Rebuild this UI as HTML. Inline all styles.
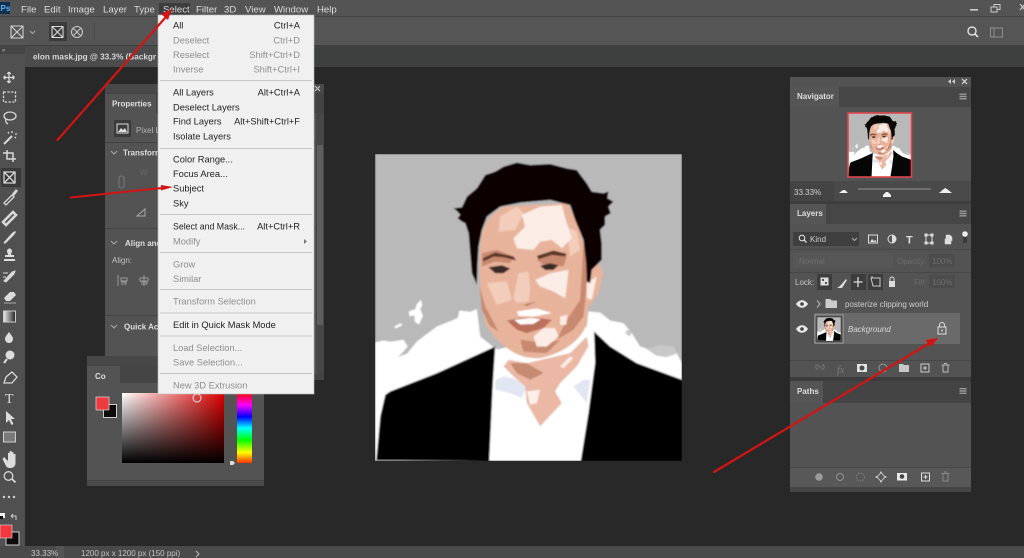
<!DOCTYPE html>
<html><head><meta charset="utf-8"><title>Photoshop Select Menu</title>
<style>
html,body{margin:0;padding:0;background:#282828;width:1024px;height:558px;overflow:hidden}
svg{display:block;filter:blur(.35px)}
text{font-family:"Liberation Sans",sans-serif;white-space:pre}
.mb{font-size:9.6px;fill:#dcdcdc}
.m{font-size:9.3px;fill:#222}
.d{font-size:9.3px;fill:#8e8e8e}
.r{text-anchor:end}
.h{font-size:8px;font-weight:bold;fill:#dedede}
.sep{stroke:#c6c6c6;stroke-width:1}
</style></head><body>
<svg width="1024" height="558" viewBox="0 0 1024 558" xmlns="http://www.w3.org/2000/svg">
<defs>
<filter id="soft" x="-2%" y="-2%" width="104%" height="104%"><feGaussianBlur stdDeviation="2.200"/></filter>
<g id="portrait">
<rect x="14" y="12" width="922" height="922" fill="#b9b9b9"/>
<path fill="#fff" d="M14 578L40 572L60 576L100 570L112 590L95 610L82 622L110 612L140 575L200 530L245 512L262 505L268 482L300 486L320 478L330 560L380 600L650 530L655 485L690 488L720 512L760 520L785 550L810 590L840 600L880 590L915 600L936 640L936 934L14 934Z"/>
<path fill="#fff" d="M115 485L135 478L140 462L152 450L156 465L150 478L158 498L146 524L134 516L132 496L118 500ZM72 530L92 520L96 526L76 536Z"/>
<path fill="#c8c8c8" d="M830 598L870 586L912 590L920 612L890 622L860 618ZM770 540L786 546L780 560L766 552Z"/>
<path fill="#fff" d="M375 595L357 934L632 934L655 790L676 640L672 540L650 560L600 620L500 630L420 620Z"/>
<path fill="#e2e6f2" d="M376 690L400 680L430 685L470 710L455 745L420 730L375 720ZM660 690L650 760L610 710L640 690Z"/>
<path fill="#eab8a4" d="M415 630L470 640L600 610L650 560L655 590L620 650L570 700L555 725L575 760L510 830L470 760L465 710L430 680L400 650Z"/>
<path fill="#c58a70" d="M420 640L470 640L520 670L480 690L440 670Z"/>
<path fill="#fdeee8" d="M570 650L600 620L610 625L580 655ZM470 725L510 720L500 760L480 765Z"/>
<path fill="#060606" d="M18 932L30 800L45 735L60 725L200 670L375 590L368 700L357 934ZM672 545L720 590L800 640L936 690L936 934L632 934L655 790L675 640Z"/>
<path fill="#e8b39b" d="M330 300C330 240 350 200 400 170L590 160C620 200 640 260 650 350L690 345L700 370L685 430L655 470L650 520C640 560 590 610 510 625C450 630 400 600 350 530C335 490 325 400 330 300Z"/>
<path fill="#c78a70" d="M328 410L345 470L385 545L360 530L335 480ZM640 280L652 340L648 430L640 500L610 540L560 570L590 510L630 450L635 370ZM450 570L530 580L570 570L530 610L460 606ZM335 310L380 300L430 320L420 340L375 335L335 350ZM500 330L545 310L590 320L580 350L520 345Z"/>
<path fill="#f3cdbc" d="M390 200L440 170L460 190L435 240L385 245ZM445 370L475 365L480 420L475 455L440 460L430 445ZM350 400L410 395L425 450L380 465ZM590 230L620 245L630 300L600 320Z"/>
<path fill="#fcece6" d="M455 195L510 170L575 165L590 220L605 265L575 295L545 270L510 275L490 300L440 295L430 265L465 230ZM495 390L540 370L595 360L590 410L585 445L550 425L510 410ZM490 560L520 535L555 535L565 560L530 590L500 590ZM570 500L592 495L588 525L570 525ZM650 400L680 380L665 450L650 445Z"/>
<path fill="#090604" d="M250 175L275 172L290 140L320 115L345 75L375 65L400 50L440 38L480 45L540 42L590 55L620 60L650 100L665 125L700 130L715 125L712 145L730 155L715 170L722 190L705 200L705 225L690 240L695 280L695 330L680 345L665 360L660 400L650 395L648 340L640 270L615 210L600 165L540 150L450 158L390 170L350 200L335 240L325 290L322 340L320 405L305 370L300 310L295 250L285 220L275 215L262 205L270 195L262 185Z"/>
<path fill="#5b3527" d="M338 325L375 308L430 320L438 332L400 322L370 320L340 335ZM500 318L550 302L590 312L585 320L545 315L505 328Z"/>
<path fill="#3a2a26" d="M355 352L395 346L420 356L400 370L375 370ZM510 348L540 340L565 346L550 360L525 360Z"/>
<path fill="#fff" d="M440 485L500 476L545 490L490 500L445 498Z"/>
<path fill="#bb6f5c" d="M410 512L450 505L510 505L545 510L520 535L470 550L440 540Z"/>
<path fill="#fff" d="M432 510L482 505L512 508L490 522L450 524Z"/>
<path fill="#a96c56" d="M430 455L460 465L500 455L470 468Z"/>
</g>
<path id="eye" d="M-6 0c3 -5 9 -5 12 0c-3 5 -9 5 -12 0Z" fill="#e8e8e8"/>
<path id="menuic" d="M-3.500 -3h7v1.400h-7zM-3.500 -.7h7v1.400h-7zM-3.500 1.600h7v1.400h-7z" fill="#999"/>
<linearGradient id="tg"><stop offset="0" stop-color="#eee"/><stop offset="1" stop-color="#222"/></linearGradient>
<linearGradient id="hue" x1="0" y1="0" x2="0" y2="1"><stop offset="0" stop-color="#f00"/><stop offset=".17" stop-color="#f0f"/><stop offset=".34" stop-color="#00f"/><stop offset=".5" stop-color="#0ff"/><stop offset=".67" stop-color="#0f0"/><stop offset=".85" stop-color="#ff0"/><stop offset="1" stop-color="#f30"/></linearGradient>
<linearGradient id="gh"><stop offset="0" stop-color="#fff"/><stop offset="1" stop-color="#e00000"/></linearGradient>
<linearGradient id="gv" x1="0" y1="0" x2="0" y2="1"><stop offset="0" stop-color="#000" stop-opacity="0"/><stop offset="1" stop-color="#000"/></linearGradient>
</defs>

<!-- App chrome -->
<rect width="1024" height="558" fill="#282828"/>
<rect width="1024" height="16" fill="#535453"/>
<rect y="16" width="1024" height="1" fill="#454545"/>
<rect y="17" width="1024" height="28" fill="#545554"/>
<rect y="45" width="1024" height="22" fill="#3e3f3f"/>
<rect y="45" width="25" height="501" fill="#505050"/>
<rect y="45" width="25" height="9" fill="#454545"/>
<rect x="25" y="46" width="137" height="21" fill="#4c4c4c"/>
<rect y="546" width="1024" height="12" fill="#4a4a4a"/>
<rect x="56" y="546" width="8" height="12" fill="#555"/>

<!-- Menu bar -->
<rect x="0" y="2" width="10" height="12" fill="#12304e"/>
<text x="0.500" y="11" style="font-size:8px;font-weight:bold;fill:#5ab4f0">Ps</text>
<rect x="159" y="3" width="31" height="12" fill="#3d3d3d"/>
<text class="mb" x="21" y="12.500">File</text>
<text class="mb" x="44" y="12.500">Edit</text>
<text class="mb" x="68" y="12.500">Image</text>
<text class="mb" x="103" y="12.500">Layer</text>
<text class="mb" x="134" y="12.500">Type</text>
<text class="mb" x="163" y="12.500">Select</text>
<text class="mb" x="196" y="12.500">Filter</text>
<text class="mb" x="224" y="12.500">3D</text>
<text class="mb" x="245" y="12.500">View</text>
<text class="mb" x="274" y="12.500">Window</text>
<text class="mb" x="317" y="12.500">Help</text>
<rect x="970" y="9" width="8" height="1.600" fill="#ccc"/>
<path d="M991 7h6v5h-6zM994 7v-2.500h6v5h-3" fill="none" stroke="#ccc" stroke-width="1"/>
<path d="M1020 4l5 6M1025 4l-5 6" stroke="#ccc" stroke-width="1.200"/>

<!-- Options bar -->
<path style="fill:none;stroke:#d0d0d0;stroke-width:1.100" d="M11 26h12v12h-12zM11 26l12 12M23 26l-12 12"/>
<path style="fill:none;stroke:#aaa;stroke-width:1" d="M30 31l2.500 2.500 2.500 -2.500"/>
<rect x="49" y="22" width="18" height="19" fill="#3b3b3b"/>
<path style="fill:none;stroke:#d8d8d8;stroke-width:1.100" d="M52 26.500h11v11h-11zM52 26.500l11 11M63 26.500l-11 11"/>
<circle cx="77" cy="32" r="5.500" style="fill:none;stroke:#c8c8c8;stroke-width:1.100"/>
<path d="M73.500 28.500l7 7M80.500 28.500l-7 7" stroke="#c8c8c8" stroke-width="1"/>
<rect x="94" y="23" width="1" height="17" fill="#484848"/>
<circle cx="972" cy="31" r="4" style="fill:none;stroke:#e0e0e0;stroke-width:1.400"/>
<path d="M975 34l3 3" stroke="#e0e0e0" stroke-width="1.600"/>
<path d="M990.500 28h12v9h-12zM994 28v9" fill="none" stroke="#8e8e8e" stroke-width="1"/>

<!-- Tab -->
<text x="33" y="59.500" style="font-size:8.200px;font-weight:bold;fill:#d8d8d8">elon mask.jpg @ 33.3% (Backgr</text>
<text x="2" y="52" style="font-size:6px;fill:#bbb">»</text>

<!-- Toolbar -->
<rect x="1" y="168" width="20" height="19" fill="#3a3a3a"/>
<g fill="none" stroke="#d8d8d8" stroke-width="1.300">
<path d="M9 72v11M3.500 77.500h11M9 72l-1.800 2M9 72l1.800 2M9 83l-1.800 -2M9 83l1.800 -2M3.500 77.500l2 -1.800M3.500 77.500l2 1.800M14.500 77.500l-2 -1.800M14.500 77.500l-2 1.800"/>
<rect x="3.500" y="92" width="12" height="10" stroke-dasharray="2.400 1.400"/>
<ellipse cx="10" cy="116" rx="6" ry="4"/><path d="M6 119c-1 2 0 4 2 5"/>
<path d="M4 144l8 -8" stroke-width="2"/><path d="M12 131v2M15 134h2M8 132l1 1.500M16 138l-1.500 -1"/>
<path d="M3 153h10v9M7 150v9h9" stroke-width="1.500"/>
<path d="M4 172h11v11h-11zM4 172l11 11M15 172l-11 11"/>
<path d="M4 203l8 -8 2 2 -8 8z"/>
<path d="M3 222l10 -10 3 3 -10 10z" stroke-width="2.600"/>
</g>
<path d="M12 194l4 -5 2 2 -4 5z" fill="#d8d8d8"/>
<path d="M4 242l8 -9 3 -2 1 1 -2 3 -8 8c-1 1 -3 1 -2 -1z" fill="#dcdcdc"/>
<path d="M7 251a2.500 2.500 0 0 1 5 0c0 2 -1 2 -1 4h3v2h-9v-2h3c0 -2 -1 -2 -1 -4zM4 259h11v2h-11z" fill="#dcdcdc"/>
<path d="M4 281l8 -9 3 -1 -1 3 -8 8zM3 273h5M3 277h3" stroke="#d8d8d8" fill="#d8d8d8" stroke-width="1"/>
<path d="M4 298l6 -6h4l2 3 -6 6h-4z" fill="#dcdcdc"/><path d="M4 303h12" stroke="#aaa" stroke-width="1"/>
<rect x="3.500" y="311" width="12" height="11" fill="url(#tg)" stroke="#ccc"/>
<path d="M9 332c3 4 4 5 4 7a4 4 0 0 1 -8 0c0 -2 1 -3 4 -7z" fill="#dcdcdc"/>
<circle cx="10" cy="355" r="4.500" fill="#dcdcdc"/><path d="M7 359l-3 4" stroke="#dcdcdc" stroke-width="2"/>
<path d="M4 383l2 -6 6 -5 5 5 -5 6z" fill="none" stroke="#d8d8d8" stroke-width="1.300"/>
<text x="5" y="403" style="font-size:14px;fill:#dcdcdc;font-family:'Liberation Serif',serif">T</text>
<path d="M6 411v12l3 -3 2.500 5 2 -1 -2.500 -5h4z" fill="#dcdcdc"/>
<rect x="3.500" y="432" width="12" height="10" fill="#7a7a7a" stroke="#cfcfcf"/>
<path d="M4 457l4 4v-8h1.500v6v-8h2v7v-6h2v7v-5h2v9c0 3 -2 5 -5 5s-4 -1 -5 -3l-3 -6z" fill="#dcdcdc"/>
<circle cx="8.500" cy="476" r="4.300" fill="none" stroke="#d8d8d8" stroke-width="1.300"/><path d="M12 479l3.500 3.500" stroke="#d8d8d8" stroke-width="1.800"/>
<g fill="#cfcfcf"><circle cx="4" cy="497" r="1.200"/><circle cx="9" cy="497" r="1.200"/><circle cx="14" cy="497" r="1.200"/></g>
<rect x="0" y="513" width="5" height="5" fill="#eee"/><rect x="0" y="516" width="3" height="3" fill="#111"/>
<path d="M11 516h5v4M11 516l2 -2M11 516l2 2" fill="none" stroke="#ccc" stroke-width="1"/>
<rect x="6" y="532" width="13" height="13" fill="#0c0c0c" stroke="#ccc"/>
<rect x="0" y="525" width="12" height="13" fill="#f2383d" stroke="#ddd" stroke-width=".6"/>

<!-- Canvas -->
<svg x="375" y="154" width="307" height="307" viewBox="14 12 922 922"><use href="#portrait" filter="url(#soft)"/></svg>

<!-- Properties panel -->
<rect x="105" y="84" width="219" height="296" fill="#535353"/>
<rect x="105" y="84" width="219" height="9" fill="#484848"/>
<rect x="105" y="93" width="219" height="20" fill="#434343"/>
<rect x="105" y="94" width="51" height="20" fill="#535353"/>
<text class="h" x="112" y="106.500">Properties</text>
<path d="M315 86l5 5M320 86l-5 5" stroke="#ccc" stroke-width="1"/>
<rect x="105" y="142" width="219" height="1" fill="#424242"/>
<rect x="114" y="120" width="17" height="17" fill="#3a3a3a"/>
<rect x="117" y="124" width="11" height="9" fill="none" stroke="#ddd"/><path d="M118 132l3 -4 2 2 2 -2 2 4z" fill="#ddd"/>
<text x="136" y="133" style="font-size:8px;fill:#b5b5b5">Pixel L</text>
<path d="M111 151l3 3 3 -3" fill="none" stroke="#aaa" stroke-width="1"/>
<text class="h" x="123" y="155.500">Transform</text>
<text x="140" y="175" style="font-size:8px;fill:#6a6a6a">W</text>
<rect x="119" y="176" width="5" height="12" rx="2" fill="none" stroke="#7a7a7a"/>
<path d="M137 216l8 -7v7z" fill="none" stroke="#aaa"/>
<rect x="105" y="228" width="219" height="1" fill="#454545"/>
<path d="M111 241l3 3 3 -3" fill="none" stroke="#aaa" stroke-width="1"/>
<text class="h" x="125" y="246">Align and</text>
<text x="112" y="263" style="font-size:8px;fill:#c0c0c0">Align:</text>
<path d="M118 275v11M121 278h6v3h-6zM121 282h5v2h-5M144 275v11M140 278h8v3h-8zM141 282h6v2h-6" stroke="#999" fill="none"/>
<rect x="105" y="315" width="219" height="1" fill="#454545"/>
<path d="M111 325l3 3 3 -3" fill="none" stroke="#aaa" stroke-width="1"/>
<text class="h" x="124" y="329.500">Quick Act</text>
<rect x="316" y="113" width="8" height="267" fill="#474747"/>
<rect x="317" y="145" width="6" height="180" fill="#5e5e5e"/>
<rect x="105" y="374" width="219" height="6" fill="#444"/>

<!-- Color panel -->
<rect x="87" y="356" width="177" height="130" fill="#535353"/>
<rect x="87" y="356" width="177" height="10" fill="#474747"/>
<rect x="87" y="366" width="177" height="17" fill="#454545"/>
<rect x="87" y="366" width="33" height="18" fill="#535353"/>
<text class="h" x="95" y="379">Co</text>
<rect x="103.500" y="404.500" width="13" height="13" fill="#0c0c0c" stroke="#ccc"/>
<rect x="96" y="397" width="13" height="13" fill="#ee3a40" stroke="#ddd" stroke-width=".7"/>
<rect x="122" y="393" width="102" height="70" fill="url(#gh)"/>
<rect x="122" y="393" width="102" height="70" fill="url(#gv)"/>
<circle cx="197" cy="398" r="4" fill="none" stroke="#eee" stroke-width=".9"/>
<rect x="237" y="393" width="15" height="70" fill="url(#hue)"/>
<path d="M230 461h3l2 2 -2 2h-3z" fill="#ddd"/>
<rect x="87" y="480" width="177" height="1" fill="#454545"/>
<rect x="87" y="481" width="177" height="5" fill="#4a4a4a"/>

<!-- Select menu -->
<rect x="158" y="15" width="156" height="379" fill="#f0f0f0" stroke="#bbb" stroke-width=".6"/>
<text class="m" x="173" y="28.500">All</text><text class="m r" x="300" y="28.500">Ctrl+A</text>
<text class="d" x="173" y="43.500">Deselect</text><text class="d r" x="300" y="43.500">Ctrl+D</text>
<text class="d" x="173" y="58">Reselect</text><text class="d r" x="300" y="58">Shift+Ctrl+D</text>
<text class="d" x="173" y="72.500">Inverse</text><text class="d r" x="300" y="72.500">Shift+Ctrl+I</text>
<path class="sep" d="M160 80.500h152"/>
<text class="m" x="173" y="95.500">All Layers</text><text class="m r" x="300" y="95.500">Alt+Ctrl+A</text>
<text class="m" x="173" y="110.500">Deselect Layers</text>
<text class="m" x="173" y="124.500">Find Layers</text><text class="m r" x="300" y="124.500">Alt+Shift+Ctrl+F</text>
<text class="m" x="173" y="139.500">Isolate Layers</text>
<path class="sep" d="M160 148.500h152"/>
<text class="m" x="173" y="162.500">Color Range...</text>
<text class="m" x="173" y="177">Focus Area...</text>
<text class="m" x="173" y="191.500">Subject</text>
<text class="m" x="173" y="206.500">Sky</text>
<path class="sep" d="M160 214.500h152"/>
<text class="m" x="173" y="229.500" textLength="72" lengthAdjust="spacingAndGlyphs">Select and Mask...</text><text class="m r" x="300" y="229.500">Alt+Ctrl+R</text>
<text class="d" x="173" y="244.500">Modify</text>
<path d="M304 239l3 2.500 -3 2.500z" fill="#777"/>
<path class="sep" d="M160 252.500h152"/>
<text class="d" x="173" y="267.500">Grow</text>
<text class="d" x="173" y="282">Similar</text>
<path class="sep" d="M160 289.500h152"/>
<text class="d" x="173" y="304.500">Transform Selection</text>
<path class="sep" d="M160 313h152"/>
<text class="m" x="173" y="328">Edit in Quick Mask Mode</text>
<path class="sep" d="M160 336h152"/>
<text class="d" x="173" y="351">Load Selection...</text>
<text class="d" x="173" y="365.500">Save Selection...</text>
<path class="sep" d="M160 373.500h152"/>
<text class="d" x="173" y="388.500">New 3D Extrusion</text>

<!-- Right panels -->
<rect x="790" y="77" width="181" height="415" fill="#535353"/>
<path d="M951 79l-3 2.500 3 2.500zM955 79l-3 2.500 3 2.500z" fill="#ccc"/>
<path d="M962 79l5 5M967 79l-5 5" stroke="#ddd" stroke-width="1.200"/>
<rect x="790" y="87" width="181" height="20" fill="#464646"/>
<rect x="790" y="87" width="49" height="20" fill="#555"/>
<text class="h" x="797" y="99">Navigator</text>
<use href="#menuic" x="963" y="96.500"/>
<g transform="translate(848,113.300) scale(.0687) translate(-14,-12)"><use href="#portrait"/></g>
<rect x="848" y="113" width="63.500" height="64" fill="none" stroke="#e0474c" stroke-width="1.600"/>
<rect x="790" y="181" width="181" height="20" fill="#4a4a4a"/>
<rect x="790" y="181" width="44" height="20" fill="#444"/>
<text x="794" y="195" style="font-size:8px;fill:#cfcfcf">33.33%</text>
<path d="M839 193l4 -3h2l3 3z" fill="#eee"/>
<rect x="858" y="188" width="73" height="2" fill="#6e6e6e"/>
<path d="M883 197v-2l3 -3h2l3 3v2z" fill="#f0f0f0"/>
<path d="M939 193l6 -5 2 1 5 4z" fill="#eee"/>
<rect x="790" y="201" width="181" height="3" fill="#3e3e3e"/>
<rect x="790" y="204" width="181" height="20" fill="#464646"/>
<rect x="790" y="204" width="36" height="20" fill="#555"/>
<text class="h" x="797" y="216">Layers</text>
<use href="#menuic" x="963" y="213.500"/>

<rect x="793" y="232" width="66" height="14" fill="#3f3f3f"/>
<circle cx="802" cy="238" r="2.800" fill="none" stroke="#ddd" stroke-width="1.100"/><path d="M804 240l2.500 2.500" stroke="#ddd" stroke-width="1.300"/>
<text x="810" y="242" style="font-size:8px;fill:#ccc">Kind</text>
<path d="M852 238l2.500 2.500 2.500 -2.500" fill="none" stroke="#aaa"/>
<rect x="868.500" y="235" width="9" height="8" fill="none" stroke="#ddd"/><path d="M870 242l2 -3 2 2 2 -1v2z" fill="#ddd"/>
<circle cx="892" cy="239" r="4" fill="none" stroke="#ddd"/><path d="M892 235a4 4 0 0 1 0 8z" fill="#ddd"/>
<text x="906" y="243.500" style="font-size:11px;font-weight:bold;fill:#ddd">T</text>
<path d="M926 235h6v8h-6zM925 234h2v2h-2zM931 234h2v2h-2zM925 242h2v2h-2zM931 242h2v2h-2z" fill="none" stroke="#ddd"/>
<path d="M945 239h6v5h-6zM946 239v-4h4l2 2v4" fill="#ddd" stroke="#ddd" stroke-width=".5"/>
<circle cx="965" cy="234" r="2.800" fill="#eee"/><rect x="963" y="237" width="4" height="6" fill="#3c3c3c"/>
<rect x="790" y="249" width="181" height="1" fill="#484848"/>
<rect x="793" y="253" width="100" height="15" fill="#575757"/>
<text x="799" y="264" style="font-size:8px;fill:#6d6d6d">Normal</text>
<text x="897" y="264" style="font-size:8px;fill:#6d6d6d">Opacity:</text>
<rect x="929" y="254" width="26" height="13" fill="#4c4c4c"/>
<text x="932" y="264" style="font-size:8px;fill:#6d6d6d">100%</text>
<rect x="790" y="272" width="181" height="1" fill="#484848"/>
<text x="795" y="285" style="font-size:8px;fill:#c8c8c8">Lock:</text>
<rect x="817" y="274" width="15" height="16" fill="#3d3d3d"/>
<rect x="851" y="274" width="15" height="16" fill="#3d3d3d"/>
<rect x="868" y="274" width="15" height="16" fill="#3d3d3d"/>
<rect x="820.500" y="277.500" width="8" height="8" fill="#ddd"/><path d="M822 279h2v2h-2zM825 282h2v2h-2z" fill="#555"/>
<path d="M837 288l3 -2 6 -7 1 1 -5 8z" fill="#ddd"/>
<path d="M858 277v10M853.500 282h9" stroke="#ddd" stroke-width="1.300"/>
<path d="M871 278h9v8h-7zM872 276v2M880 284v3" fill="none" stroke="#ccc"/>
<path d="M889 281h6v6h-6z" fill="#ddd"/><path d="M890 281v-2a2 2 0 0 1 4 0v2" fill="none" stroke="#ddd"/>
<text x="914" y="285" style="font-size:8px;fill:#6d6d6d">Fill:</text>
<rect x="929" y="275" width="26" height="13" fill="#4c4c4c"/>
<text x="932" y="285" style="font-size:8px;fill:#6d6d6d">100%</text>

<use href="#eye" x="802" y="304"/><circle cx="802" cy="304" r="1.800" fill="#444"/>
<path d="M817 300.500l3 3.500 -3 3.500" fill="none" stroke="#bbb"/>
<path d="M825.500 299h5l1 1.500h5.500v7.500h-11.500z" fill="#ccc"/>
<text x="845" y="307" style="font-size:8px;fill:#cfcfcf">posterize clipping world</text>
<rect x="814" y="313" width="146" height="31" fill="#6a6a6a"/>
<use href="#eye" x="802" y="329"/><circle cx="802" cy="329" r="1.800" fill="#444"/>
<rect x="815" y="315" width="28" height="28" fill="#4a4a4a" stroke="#ccc" stroke-width=".6"/>
<g transform="translate(817.300,317.300) scale(.0254) translate(-14,-12)"><use href="#portrait"/></g>
<text x="848" y="332" style="font-size:8px;font-style:italic;fill:#d8d8d8">Background</text>
<rect x="938" y="327" width="8" height="7" fill="none" stroke="#ddd"/><path d="M939.500 327v-2a2.500 2.500 0 0 1 5 0v2" fill="none" stroke="#ddd"/><circle cx="942" cy="330.500" r=".9" fill="#ddd"/>

<rect x="790" y="360" width="181" height="1" fill="#474747"/>
<path d="M818 369h-1a2.200 2.200 0 0 1 0 -4h2M822 365h1a2.200 2.200 0 0 1 0 4h-2M818 367h4" stroke="#777" fill="none"/>
<text x="837" y="373" style="font-size:10px;font-style:italic;fill:#7d7d7d;font-family:'Liberation Serif',serif">fx</text>
<rect x="857" y="364" width="10" height="8" fill="#e2e2e2"/><circle cx="862" cy="368" r="2.500" fill="#4a4a4a"/>
<circle cx="883" cy="368" r="4" fill="none" stroke="#999"/>
<path d="M899 364h4l1 1h5v7h-10z" fill="#c8c8c8"/>
<rect x="921" y="364" width="8" height="8" fill="none" stroke="#ccc"/><path d="M925 366v4M923 368h4" stroke="#ccc"/>
<path d="M941.500 365h8M943 365v7h5v-7M944 363.500h3" fill="none" stroke="#bbb"/>

<rect x="790" y="377" width="181" height="4" fill="#3c3c3c"/>
<rect x="790" y="381" width="181" height="22" fill="#444"/>
<rect x="790" y="381" width="33" height="22" fill="#555"/>
<text class="h" x="797" y="394">Paths</text>
<use href="#menuic" x="963" y="391"/>
<rect x="790" y="467" width="181" height="1" fill="#474747"/>
<rect x="790" y="468" width="181" height="19" fill="#585858"/>
<rect x="790" y="487" width="181" height="5" fill="#464646"/>
<circle cx="819" cy="477" r="3.800" fill="#9a9a9a"/>
<circle cx="840" cy="477" r="3.500" fill="none" stroke="#8a8a8a" stroke-width="1.200"/>
<circle cx="860.500" cy="477" r="4" fill="none" stroke="#808080" stroke-dasharray="1.500 1.200"/>
<path d="M881 472.500l4 4.500 -4 4.500 -4 -4.500z" fill="none" stroke="#bdbdbd"/><g fill="#ccc"><circle cx="881" cy="472.500" r="1"/><circle cx="881" cy="481.500" r="1"/><circle cx="876.500" cy="477" r="1"/><circle cx="885.500" cy="477" r="1"/></g>
<rect x="897" y="473" width="10" height="7.500" fill="#e8e8e8"/><circle cx="902" cy="476.500" r="2.300" fill="#444"/>
<rect x="921.500" y="473" width="8" height="8" fill="none" stroke="#ddd"/><path d="M925.500 475v4M923.500 477h4" stroke="#ddd"/>
<path d="M941.500 473.500h8M943 473.500v7.500h5v-7.500M944 472h3" fill="none" stroke="#888"/>

<!-- Status -->
<text x="31" y="556" style="font-size:8px;fill:#c8c8c8">33.33%</text>
<text x="81" y="556" style="font-size:8px;fill:#c2c2c2">1200 px x 1200 px (150 ppi)</text>
<path d="M196 551l3 3 -3 3" fill="none" stroke="#bbb"/>

<!-- Red arrows -->
<g fill="none" stroke="#d21414" stroke-linecap="round">
<path d="M57.500 140L165 18" stroke-width="2.200"/>
<path d="M70.500 197.500L162 188" stroke-width="2"/>
<path d="M714 472L928 344" stroke-width="2.200"/>
</g>
<g fill="#d21414">
<path d="M172 9L168 20L161 14Z"/>
<path d="M173 187L161 190.500L161 185Z"/>
<path d="M938 338L931 347L925.500 340Z"/>
</g>
</svg>
</body></html>
